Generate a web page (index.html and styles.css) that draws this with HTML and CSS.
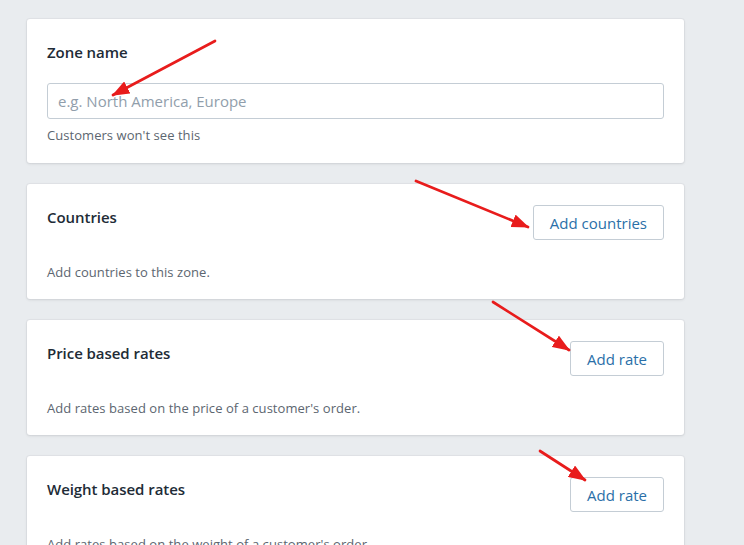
FILE: index.html
```html
<!DOCTYPE html>
<html>
<head>
<meta charset="utf-8">
<link rel="stylesheet" href="styles.css">
</head>
<body>
<main class="page">
  <section class="card">
    <h2 class="title">Zone name</h2>
    <input class="field" type="text" placeholder="e.g. North America, Europe">
    <p class="help help-tight">Customers won't see this</p>
  </section>
  <section class="card">
    <div class="head">
      <h2 class="title">Countries</h2>
      <button class="btn">Add countries</button>
    </div>
    <p class="help">Add countries to this zone.</p>
  </section>
  <section class="card">
    <div class="head">
      <h2 class="title">Price based rates</h2>
      <button class="btn">Add rate</button>
    </div>
    <p class="help">Add rates based on the price of a customer's order.</p>
  </section>
  <section class="card">
    <div class="head">
      <h2 class="title">Weight based rates</h2>
      <button class="btn">Add rate</button>
    </div>
    <p class="help">Add rates based on the weight of a customer's order.</p>
  </section>
</main>
<svg class="arrows" width="744" height="545" viewBox="0 0 744 545">
  <defs>
    <marker id="head" markerWidth="6.5" markerHeight="5" refX="6" refY="2.5" orient="auto" markerUnits="strokeWidth">
      <path d="M0,0 L6.5,2.5 L0,5 Z" fill="#e81c1c"/>
    </marker>
  </defs>
  <g stroke="#e81c1c" stroke-width="2.7" stroke-linecap="round" fill="none">
    <line x1="215" y1="41" x2="113" y2="95" marker-end="url(#head)"/>
    <line x1="416" y1="181" x2="528" y2="227" marker-end="url(#head)"/>
    <line x1="493" y1="302" x2="569" y2="350" marker-end="url(#head)"/>
    <line x1="540" y1="451" x2="585" y2="480" marker-end="url(#head)"/>
  </g>
</svg>
</body>
</html>
```
FILE: styles.css
```css
* { box-sizing: border-box; }
html, body { margin: 0; padding: 0; }
body {
  background: #e9ecef;
  font-family: "Open Sans", "Noto Sans", sans-serif;
  color: #212b36;
  width: 744px;
  height: 545px;
  overflow: hidden;
  position: relative;
}
.page {
  display: flex;
  flex-direction: column;
  gap: 21px;
  padding: 19px 0 0 27px;
  width: 684px;
}
.card {
  background: #fff;
  border-radius: 3px;
  box-shadow: 0 0 0 1px rgba(63,63,68,0.04), 0 1px 3px rgba(63,63,68,0.12);
  padding: 20px 20px 18px 20px;
  display: flex;
  flex-direction: column;
}
.title {
  margin: 3px 0 0 0;
  font-size: 15px;
  font-weight: 600;
  line-height: 20px;
  letter-spacing: -0.05px;
}
.field {
  margin-top: 21px;
  height: 36px;
  width: 100%;
  border: 1px solid #c4cdd5;
  border-radius: 3px;
  padding: 0 10px;
  font-family: inherit;
  font-size: 15px;
  color: #212b36;
  outline: none;
}
.field::placeholder { color: #919eab; }
.help {
  margin: 23px 0 0 0;
  font-size: 13px;
  line-height: 18px;
  color: #5c6670;
  letter-spacing: 0.05px;
}
.help-tight { margin: 7px 0 1px 0; }
.head {
  display: flex;
  justify-content: space-between;
  align-items: flex-start;
}
.btn {
  height: 35px;
  margin-top: 1px;
  padding: 0 16px;
  background: #fff;
  border: 1px solid #c4cdd5;
  border-radius: 3px;
  font-family: inherit;
  font-size: 15px;
  color: #2a6fa8;
  cursor: pointer;
}
.arrows {
  position: absolute;
  left: 0;
  top: 0;
  pointer-events: none;
}
```
